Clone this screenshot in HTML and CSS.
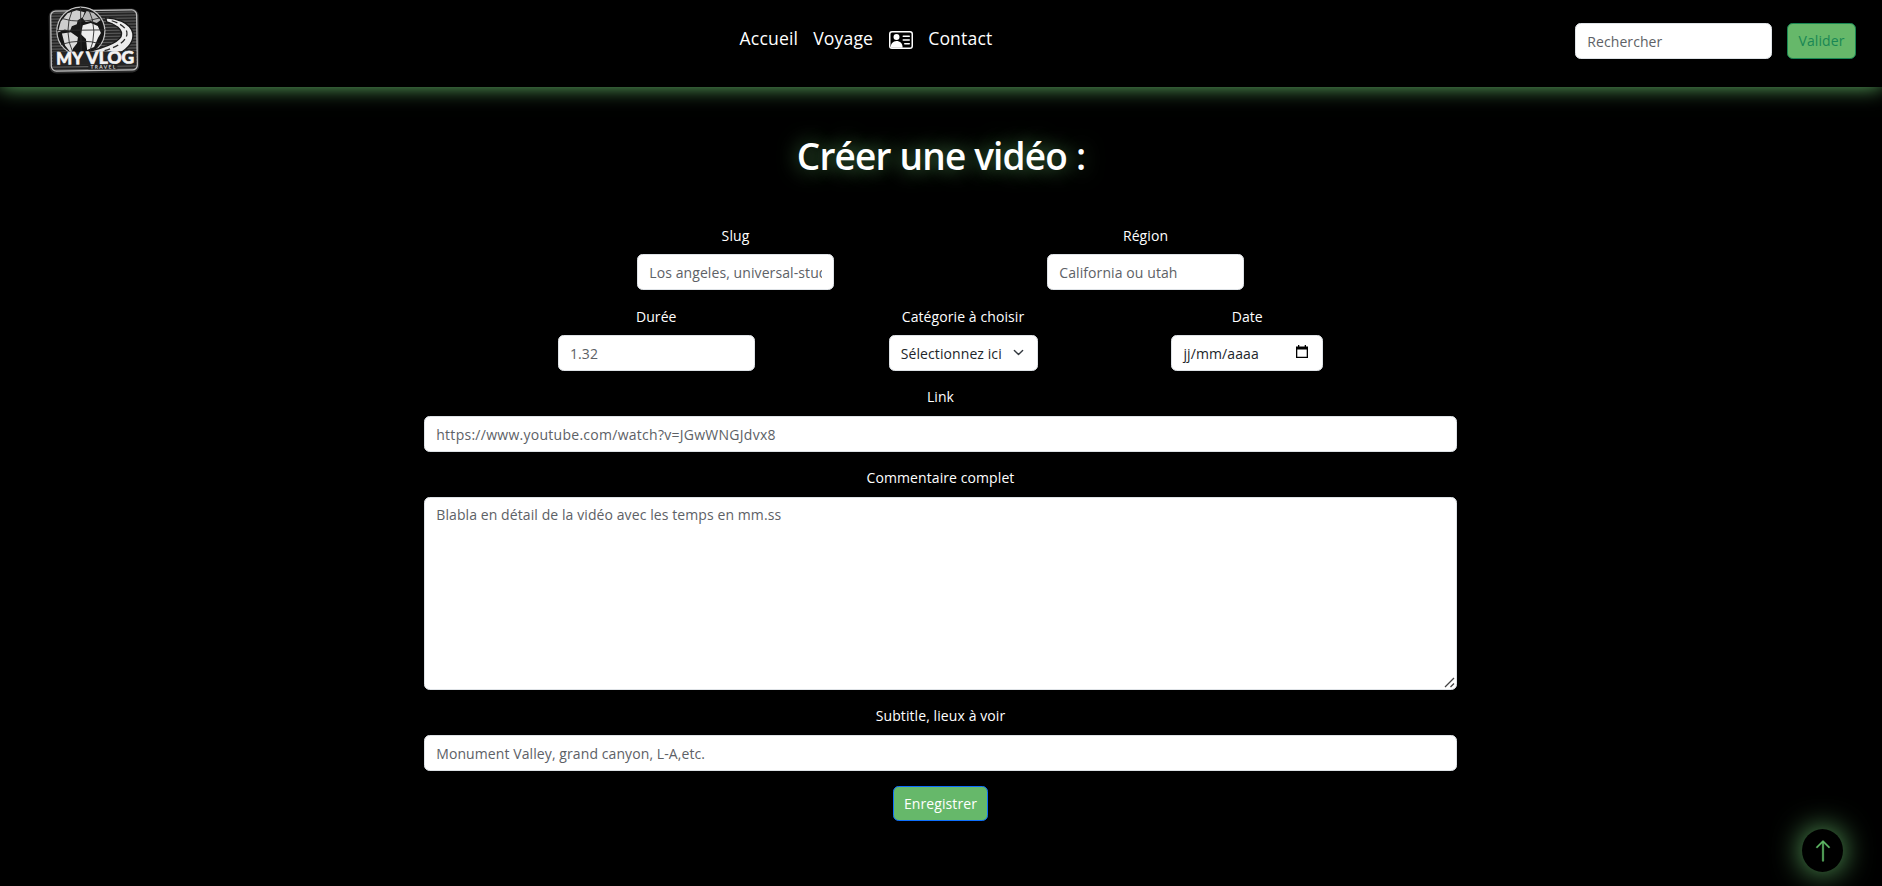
FILE: index.html
```html
<!DOCTYPE html>
<html lang="fr">
<head>
<meta charset="utf-8">
<title>My Vlog Travel</title>
<link rel="stylesheet" href="styles.css">
</head>
<body>
<header class="navbar">
  <a class="brand">
    <svg class="logo" viewBox="0 0 92 68" width="92" height="68">
      <defs>
        <pattern id="hatch" width="8" height="3" patternUnits="userSpaceOnUse">
          <rect width="8" height="3" fill="#1d1d1d"/><rect width="8" height="1.2" fill="#626262"/>
        </pattern>
      </defs>
      <g transform="rotate(-.8 46 34)">
        <rect x="1" y="3" width="90" height="64" rx="7" fill="#2c2c2c"/>
        <rect x="3" y="4.500" width="86" height="60" rx="5" fill="url(#hatch)" stroke="#bdbdbd" stroke-width="1.300"/>
        <circle cx="33" cy="25" r="24" fill="#161616" stroke="#c4c4c4" stroke-width="1.200"/>
        <path d="M13 15L20 7L29 4L37 6L35 11L30 14L29 18L24 20L22 25L17 23L10 26Z" fill="#cecece"/>
        <path d="M14 27L23 26L30 31L29 37L25 42L23 47L17 39Z" fill="#dcdcdc"/>
        <path d="M39 5L46 7L53 14L49 17L43 15L38 16L35 12Z" fill="#b8b8b8"/>
        <path d="M35 19L43 17L50 20L53 27L50 32L46 41L39 44L38 33L33 28Z" fill="#ededed"/>
        <path d="M33 1V48M9 24H57M14 12Q33 18 52 12M13 38Q33 32 53 38M25 3Q15 25 25 47M41 3Q51 25 41 47" fill="none" stroke="#2b2b2b" stroke-width=".9"/>
        <path d="M58 12C67 12 83 17 85 28C86 37 80 43 71 48L28 48C49 44 69 38 73 31C76 24 67 18 59 16Z" fill="#ececec" stroke="#191919" stroke-width="1.400"/>
        <path d="M64 15C73 18 80 23 79 29C77 37 68 42 52 46" fill="none" stroke="#292929" stroke-width="1.300" stroke-dasharray="6 3"/>
        <path d="M4.500 45.500H88V58.500H4.500Z" fill="#242424"/>
        <text class="logo-name" x="8" y="58" textLength="27" lengthAdjust="spacingAndGlyphs">MY</text>
        <text class="logo-name" x="38" y="58" textLength="48" lengthAdjust="spacingAndGlyphs">VLOG</text>
        <rect x="40" y="58.500" width="29" height="5" fill="#242424"/>
        <text class="logo-sub" x="42" y="62.800" textLength="25">TRAVEL</text>
      </g>
    </svg>
  </a>
  <nav class="links">
    <a>Accueil</a>
    <a>Voyage</a>
    <a class="card-link"><svg width="24" height="24" viewBox="0 0 16 16" fill="#fff"><path d="M5 8a2 2 0 1 0 0-4 2 2 0 0 0 0 4m4-2.500a.5.5 0 0 1 .5-.5h4a.5.5 0 0 1 0 1h-4a.5.5 0 0 1-.5-.5M9 8a.5.5 0 0 1 .5-.5h4a.5.5 0 0 1 0 1h-4A.5.5 0 0 1 9 8m1 2.500a.5.5 0 0 1 .5-.5h3a.5.5 0 0 1 0 1h-3a.5.5 0 0 1-.5-.5"/><path fill-rule="evenodd" d="M2 2a2 2 0 0 0-2 2v8a2 2 0 0 0 2 2h12a2 2 0 0 0 2-2V4a2 2 0 0 0-2-2zM1 4a1 1 0 0 1 1-1h12a1 1 0 0 1 1 1v8a1 1 0 0 1-1 1H2a1 1 0 0 1-1-1z"/><path d="M1.300 13.200C.7 10.600 2.800 8.600 5 8.600S9.400 10.400 9 13.200Z"/></svg></a>
    <a>Contact</a>
  </nav>
  <form class="search">
    <input class="control" type="text" placeholder="Rechercher">
    <button class="btn btn-outline" type="button">Valider</button>
  </form>
</header>

<main>
  <h1 class="title">Créer une vidéo :</h1>
  <form class="video-form">
    <div class="row">
      <div class="field"><label>Slug</label><input class="control" type="text" placeholder="Los angeles, universal-studio"></div>
      <div class="field"><label>Région</label><input class="control" type="text" placeholder="California ou utah"></div>
    </div>
    <div class="row">
      <div class="field"><label>Durée</label><input class="control" type="text" placeholder="1.32"></div>
      <div class="field">
        <label>Catégorie à choisir</label>
        <div class="control select"><span>Sélectionnez ici</span>
          <svg width="11" height="11" viewBox="0 0 16 16" fill="none" stroke="#343a40" stroke-width="2" stroke-linecap="round" stroke-linejoin="round"><path d="m2 5 6 6 6-6"/></svg>
        </div>
      </div>
      <div class="field">
        <label>Date</label>
        <div class="control date"><span>jj/mm/aaaa</span>
          <svg width="12" height="14" viewBox="0 0 12 14"><path d="M0 1.500h12V13H0zM1.300 4.500v7.200h9.400V4.500z" fill="#000" fill-rule="evenodd"/><path d="M2 0h1.300v2H2zM8.700 0H10v2H8.700z"/></svg>
        </div>
      </div>
    </div>
    <div class="field wide"><label>Link</label><input class="control t-link" type="text" placeholder="https://www.youtube.com/watch?v=JGwWNGJdvx8"></div>
    <div class="field wide comment"><label>Commentaire complet</label><textarea class="control" placeholder="Blabla en détail de la vidéo avec les temps en mm.ss"></textarea>
      <svg class="grip" width="11" height="11" viewBox="0 0 11 11" stroke="#444" stroke-width="1.300"><path d="M1 10L10 1M6.500 10L10 6.500"/></svg>
    </div>
    <div class="field wide"><label>Subtitle, lieux à voir</label><input class="control" type="text" placeholder="Monument Valley, grand canyon, L-A,etc."></div>
    <button class="btn btn-save" type="button">Enregistrer</button>
  </form>
</main>

<a class="to-top"><svg width="24" height="24" viewBox="0 0 16 16" fill="#5fb865"><path fill-rule="evenodd" stroke="#5fb865" stroke-width=".25" d="M8 15a.5.5 0 0 0 .5-.5V2.707l3.146 3.147a.5.5 0 0 0 .708-.708l-4-4a.5.5 0 0 0-.708 0l-4 4a.5.5 0 1 0 .708.708L7.500 2.707V14.500a.5.5 0 0 0 .5.5"/></svg></a>
</body>
</html>
```
FILE: styles.css
```css
* { box-sizing: border-box; }
html { font-size: 15px; }
body {
  margin: 0;
  height: 886px;
  overflow: hidden;
  background: #000;
  color: #fff;
  font-family: "Open Sans", "Noto Sans", sans-serif;
  font-size: 14px;
  letter-spacing: 0.09px;
  line-height: 22.5px;
}
.navbar {
  height: 87px;
  padding: 6px 26px 0 48px;
  display: flex;
  justify-content: space-between;
  align-items: flex-start;
  background: #000;
  box-shadow: 0 0 20px #66b86a;
}
.brand { width: 109px; }
.logo { display: block; }
.logo-name { font: 900 17px Lato, sans-serif; letter-spacing: 0; fill: #f3f3f3; stroke: #f3f3f3; stroke-width: 0.6px; }
.logo-sub { font: 700 5px Lato, sans-serif; fill: #ddd; }
.links {
  display: flex;
  gap: 15px;
  padding: 17px 7px 0;
  font-size: 17.6px;
  letter-spacing: 0.15px;
  line-height: 30px;
}
.card-link svg { display: block; margin: 5px 0 0 1px; }
.search { display: flex; gap: 15px; padding-top: 17px; }
.control {
  display: block;
  width: 197px;
  height: 35.75px;
  margin: 0;
  padding: 6.4px 11.25px 4.8px;
  border: 1px solid #dee2e6;
  border-radius: 5.6px;
  background: #fff;
  color: #212529;
  font: inherit;
  letter-spacing: inherit;
  line-height: 22.5px;
}
.control::placeholder { color: #5d6166; opacity: 1; }
.t-link { letter-spacing: 0.27px; }
.btn {
  height: 35.75px;
  padding: 1px 9px 0;
  border-radius: 5.6px;
  background: #66b86a;
  font: inherit;
  letter-spacing: inherit;
}
.btn-outline { width: 69px; border: 1px solid #198754; color: #198754; }
.btn-save {
  width: 95px;
  align-self: center;
  border: 1px solid #0d6efd;
  color: #fff;
}
.title {
  margin: 0;
  padding-top: 45px;
  text-align: center;
  font-size: 37px;
  letter-spacing: -0.82px;
  line-height: 48px;
  font-weight: 600;
  text-shadow: 0 0 20px rgba(102, 184, 106, 0.8);
}
.video-form {
  width: 1033px;
  margin: 44.2px 0 0 424px;
  display: flex;
  flex-direction: column;
}
.row { display: flex; justify-content: space-evenly; }
.field {
  display: flex;
  flex-direction: column;
  align-items: center;
  margin-bottom: 15px;
}
.field label { padding-top: 0.5px; margin-bottom: 7.1px; }
.wide .control { width: 100%; }
.field textarea.control { height: 193px; resize: none; }
.comment { position: relative; }
.grip { position: absolute; right: 2px; bottom: 2px; }
.select, .date { display: flex; justify-content: space-between; align-items: center; white-space: nowrap; }
.select { width: 149px; padding-right: 13px; }
.date { width: 152px; padding-right: 14px; }
.select svg, .date svg { margin-top: -3px; }
.to-top {
  position: fixed;
  left: 1802px;
  top: 829px;
  width: 41px;
  height: 43px;
  border-radius: 50%;
  display: flex;
  align-items: center;
  justify-content: center;
  background: #000;
  box-shadow: 0 0 30px #66b86a;
}
```
